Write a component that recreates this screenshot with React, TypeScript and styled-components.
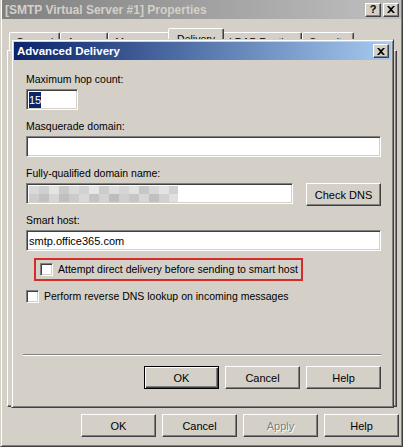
import React from "react";
import styled, { createGlobalStyle, css } from "styled-components";

const face = "#d4d0c8";

const Global = createGlobalStyle`
  html, body { margin: 0; padding: 0; background: ${face}; overflow: hidden; }
  body { font-family: "Liberation Sans", Arial, sans-serif; font-size: 10.5px; color: #000; }
  * { box-sizing: border-box; }
`;

const raised = css`
  border: 1px solid;
  border-color: #fff #404040 #404040 #fff;
  box-shadow: inset -1px -1px #808080, inset 1px 1px ${face};
`;

const sunken = css`
  border: 1px solid;
  border-color: #808080 #fff #fff #808080;
  box-shadow: inset 1px 1px #404040, inset -1px -1px ${face};
`;

const Window = styled.div`
  position: relative;
  width: 403px;
  height: 447px;
  background: ${face};
  border-style: solid;
  border-width: 0 1px 1px 1px;
  border-color: ${face} #404040 #404040 ${face};
  box-shadow: inset 1px 0 #fff, inset -1px -1px #808080;
  padding: 0 1px 1px 1px;
  display: flex;
  flex-direction: column;
`;

const TitleBar = styled.div<{ $active?: boolean }>`
  height: ${(p) => (p.$active ? 18 : 19)}px;
  flex: none;
  display: flex;
  align-items: center;
  padding: 0 2px 0 3px;
  background: ${(p) =>
    p.$active
      ? "linear-gradient(to right, #0a246a, #a6caf0)"
      : "linear-gradient(to right, #808080, #c0c0c0)"};
`;

const TitleText = styled.div<{ $active?: boolean }>`
  flex: 1;
  font-weight: bold;
  font-size: ${(p) => (p.$active ? 11.5 : 12)}px;
  color: ${(p) => (p.$active ? "#fff" : face)};
  white-space: nowrap;
  overflow: hidden;
`;

const CapButton = styled.div`
  width: 16px;
  height: 14px;
  margin-left: 2px;
  background: ${face};
  ${raised};
  display: flex;
  align-items: center;
  justify-content: center;
  font-weight: bold;
  font-size: 11px;
  line-height: 1;
`;

const Body = styled.div`
  flex: 1;
  display: flex;
  flex-direction: column;
  padding: 0 4px 0 5px;
`;

const Tabs = styled.div`
  display: flex;
  align-items: flex-end;
  margin-top: 9px;
  padding-left: 2px;
  height: 22px;
  flex: none;
`;

const Tab = styled.div<{ $selected?: boolean }>`
  height: ${(p) => (p.$selected ? 22 : 18)}px;
  padding: ${(p) => (p.$selected ? "4px 8px 0" : "3px 6px 0")};
  margin: ${(p) => (p.$selected ? "0 -2px" : "0")};
  position: relative;
  z-index: ${(p) => (p.$selected ? 1 : 0)};
  background: ${face};
  border: 1px solid;
  border-bottom: none;
  border-color: #fff #404040 transparent #fff;
  border-radius: 2px 2px 0 0;
  box-shadow: inset -1px 0 #808080;
  white-space: nowrap;
`;

const TabPanel = styled.div`
  flex: 1;
  background: ${face};
  ${raised};
`;

const ButtonRow = styled.div<{ $inner?: boolean }>`
  display: flex;
  justify-content: flex-end;
  gap: 6px;
  padding: ${(p) => (p.$inner ? "10px 0 0 0" : "7px 2px 8px 0")};
  flex: none;
`;

const Button = styled.div<{ $default?: boolean; $disabled?: boolean; $w?: number }>`
  width: ${(p) => p.$w ?? 75}px;
  height: 23px;
  flex: none;
  display: flex;
  align-items: center;
  justify-content: center;
  background: ${face};
  font-size: 11px;
  ${(p) =>
    p.$default
      ? css`
          border: 1px solid #000;
          box-shadow: inset 1px 1px #fff, inset -1px -1px #404040, inset -2px -2px #808080;
        `
      : raised};
  color: ${(p) => (p.$disabled ? "#808080" : "#000")};
  text-shadow: ${(p) => (p.$disabled ? "1px 1px #fff" : "none")};
`;

const Dialog = styled.div`
  position: absolute;
  z-index: 10;
  left: 10px;
  top: 39px;
  width: 383px;
  height: 369px;
  background: ${face};
  border: 1px solid;
  border-color: ${face} #404040 #404040 ${face};
  box-shadow: inset 1px 1px #fff, inset -1px -1px #808080;
  padding: 2px;
  display: flex;
  flex-direction: column;
`;

const DialogBody = styled.div`
  flex: 1;
  display: flex;
  flex-direction: column;
  padding: 13px 10px 16px 12px;
`;

const Fields = styled.div`
  display: flex;
  flex-direction: column;
  gap: 10px;
`;

const Field = styled.div`
  display: flex;
  flex-direction: column;
  gap: 3px;
`;

const Label = styled.div`
  line-height: 13px;
  font-size: 10.5px;
`;

const InputRow = styled.div`
  display: flex;
  align-items: flex-start;
  justify-content: space-between;
  margin-bottom: -2px;
`;

const TextBox = styled.div<{ $w?: number }>`
  width: ${(p) => (p.$w ? `${p.$w}px` : "100%")};
  height: 21px;
  background: #fff;
  ${sunken};
  padding: 0 2px;
  display: flex;
  align-items: center;
  font-size: 11px;
  white-space: nowrap;
  overflow: hidden;
`;

const Selected = styled.span`
  background: #0a246a;
  color: #fff;
  padding: 1px 0;
  line-height: 14px;
`;

const Highlight = styled.div`
  align-self: flex-start;
  margin: 7px 0 0 8px;
  border: 2px solid #d52b2b;
  padding: 3px 3px 3px 4px;
`;

const CheckRow = styled.label<{ $mt?: number }>`
  display: flex;
  align-items: center;
  gap: 5px;
  height: 13px;
  line-height: 13px;
  margin-top: ${(p) => p.$mt ?? 0}px;
  font-size: 10.5px;
  white-space: nowrap;
`;

const CheckBox = styled.span`
  width: 13px;
  height: 13px;
  flex: none;
  background: #fff;
  ${sunken};
`;

const Spacer = styled.div`
  flex: 1;
`;

const Separator = styled.div`
  height: 2px;
  margin-left: -3px;
  border-top: 1px solid #808080;
  border-bottom: 1px solid #fff;
`;

const CloseGlyph = () => (
  <svg width="8" height="7" viewBox="0 0 8 7">
    <path d="M0 0h2l2 2 2-2h2L5 3.5 8 7H6L4 5 2 7H0l3-3.5z" fill="#000" />
  </svg>
);

const blocks = [
  "#d9d9d9", "#cfcfcf", "#e4e4e4", "#c9c9c9", "#dadada", "#d2d2d2", "#e6e6e6",
  "#cccccc", "#dddddd", "#d5d5d5", "#e1e1e1", "#c7c7c7", "#d8d8d8", "#e3e3e3", "#d0d0d0",
];
const blocks2 = [
  "#cdcdcd", "#c2c2c2", "#d6d6d6", "#bfbfbf", "#cbcbcb", "#d9d9d9", "#c4c4c4",
  "#d3d3d3", "#bdbdbd", "#cfcfcf", "#c6c6c6", "#d7d7d7", "#c0c0c0", "#d1d1d1", "#e0e0e0",
];

const Pixelated = () => (
  <svg width="149" height="16" viewBox="0 0 149 16">
    {blocks.map((c, i) => (
      <rect key={"a" + i} x={i * 10} y={0} width={10} height={8} fill={c} />
    ))}
    {blocks2.map((c, i) => (
      <rect key={"b" + i} x={i * 10} y={8} width={10} height={8} fill={c} />
    ))}
  </svg>
);

export default function App() {
  return (
    <>
      <Global />
      <Window>
        <TitleBar>
          <TitleText>[SMTP Virtual Server #1] Properties</TitleText>
          <CapButton>?</CapButton>
          <CapButton>
            <CloseGlyph />
          </CapButton>
        </TitleBar>
        <Body>
          <Tabs>
            <Tab>General</Tab>
            <Tab>Access</Tab>
            <Tab>Messages</Tab>
            <Tab $selected>Delivery</Tab>
            <Tab>LDAP Routing</Tab>
            <Tab>Security</Tab>
          </Tabs>
          <TabPanel />
        </Body>
        <ButtonRow>
          <Button>OK</Button>
          <Button>Cancel</Button>
          <Button $disabled>Apply</Button>
          <Button>Help</Button>
        </ButtonRow>

        <Dialog>
          <TitleBar $active>
            <TitleText $active>Advanced Delivery</TitleText>
            <CapButton>
              <CloseGlyph />
            </CapButton>
          </TitleBar>
          <DialogBody>
            <Fields>
              <Field>
                <Label>Maximum hop count:</Label>
                <TextBox $w={52}>
                  <Selected>15</Selected>
                </TextBox>
              </Field>
              <Field>
                <Label>Masquerade domain:</Label>
                <TextBox />
              </Field>
              <Field>
                <Label>Fully-qualified domain name:</Label>
                <InputRow>
                  <TextBox $w={267}>
                    <Pixelated />
                  </TextBox>
                  <Button>Check DNS</Button>
                </InputRow>
              </Field>
              <Field>
                <Label>Smart host:</Label>
                <TextBox>smtp.office365.com</TextBox>
              </Field>
            </Fields>
            <Highlight>
              <CheckRow>
                <CheckBox />
                Attempt direct delivery before sending to smart host
              </CheckRow>
            </Highlight>
            <CheckRow $mt={9}>
              <CheckBox />
              Perform reverse DNS lookup on incoming messages
            </CheckRow>
            <Spacer />
            <Separator />
            <ButtonRow $inner>
              <Button $default>OK</Button>
              <Button>Cancel</Button>
              <Button>Help</Button>
            </ButtonRow>
          </DialogBody>
        </Dialog>
      </Window>
    </>
  );
}
